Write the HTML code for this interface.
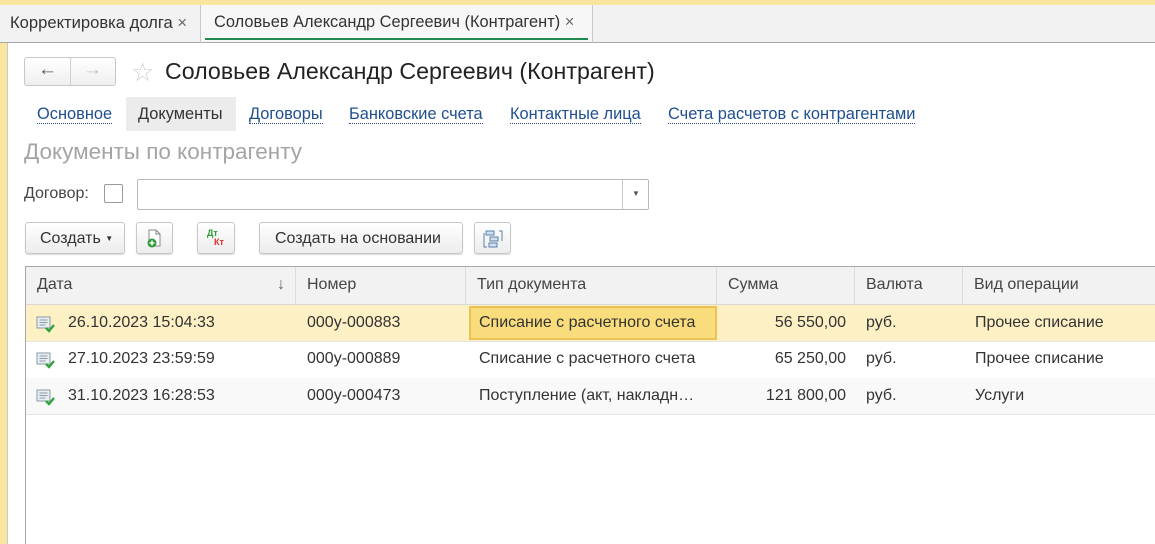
<!DOCTYPE html>
<html><head><meta charset="utf-8"><style>
*{margin:0;padding:0;box-sizing:border-box}
body{width:1155px;height:544px;overflow:hidden;background:#fff;font-family:"Liberation Sans",Arial,sans-serif;color:#333;font-size:16px;position:relative}
.a{position:absolute;white-space:nowrap}
.lnk{color:#1f4f8f;border-bottom:1px dotted #1f4f8f;line-height:18px;font-size:16.4px}
.btn{position:absolute;top:222px;height:32px;border:1px solid #c8c8c8;border-radius:3px;background:linear-gradient(#fff,#ececec);box-shadow:0 1px 1px rgba(0,0,0,.15)}
.th{position:absolute;top:267px;height:37px;background:#f2f2f2;border-right:1px solid #ddd;line-height:36px;padding-left:11px;color:#444}
.row{position:absolute;left:26px;right:0;height:37px;line-height:36px;border-bottom:1px solid #e4e4e4}
.c{position:absolute;top:0;white-space:nowrap}
</style></head><body>
<div class="a" style="left:0;top:0;width:1155px;height:5px;background:#f7e5a0"></div>
<div class="a" style="left:0;top:5px;width:1155px;height:38px;background:#f2f2f2;border-bottom:1px solid #a8a8a8"></div>
<div class="a" style="left:10px;top:13px;font-size:16.6px;color:#333">Корректировка долга <span style="color:#666">×</span></div>
<div class="a" style="left:200px;top:5px;width:1px;height:38px;background:#c8c8c8"></div>
<div class="a" style="left:201px;top:5px;width:391px;height:37px;background:#f7f7f7"></div>
<div class="a" style="left:214px;top:13px;font-size:16.4px;color:#333">Соловьев Александр Сергеевич (Контрагент) <span style="color:#666">×</span></div>
<div class="a" style="left:205px;top:38px;width:383px;height:2px;background:#1e8a50"></div>
<div class="a" style="left:592px;top:5px;width:1px;height:38px;background:#c8c8c8"></div>
<div class="a" style="left:0;top:43px;width:8px;height:501px;background:#f7e5a0;border-right:1px solid #c8c8c8"></div>

<div class="a" style="left:24px;top:57px;width:92px;height:29px;border:1px solid #c8c8c8;border-radius:3px;background:linear-gradient(#fff,#efefef)"></div>
<div class="a" style="left:70px;top:58px;width:1px;height:27px;background:#d0d0d0"></div>
<div class="a" style="left:38px;top:59px;font-size:19px;color:#555;font-weight:bold">&#8592;</div>
<div class="a" style="left:83px;top:59px;font-size:19px;color:#c4c4c4;font-weight:bold">&#8594;</div>
<div class="a" style="left:131px;top:57px;font-size:26px;color:#d0d0d0">☆</div>
<div class="a" style="left:165px;top:58px;font-size:23.2px;color:#222">Соловьев Александр Сергеевич (Контрагент)</div>

<div class="a" style="left:126px;top:97px;width:110px;height:34px;background:#ececec"></div>
<div class="a lnk" style="left:37px;top:105px">Основное</div>
<div class="a" style="left:138px;top:105px;line-height:18px;color:#333;font-size:16.4px">Документы</div>
<div class="a lnk" style="left:249px;top:105px">Договоры</div>
<div class="a lnk" style="left:349px;top:105px">Банковские счета</div>
<div class="a lnk" style="left:510px;top:105px">Контактные лица</div>
<div class="a lnk" style="left:668px;top:105px">Счета расчетов с контрагентами</div>

<div class="a" style="left:24px;top:139px;font-size:22.5px;color:#a4a4a4">Документы по контрагенту</div>

<div class="a" style="left:24px;top:185px;color:#444">Договор:</div>
<div class="a" style="left:104px;top:184px;width:19px;height:19px;border:1px solid #9a9a9a;border-radius:2px;background:#fff"></div>
<div class="a" style="left:137px;top:179px;width:512px;height:31px;border:1px solid #b8b8b8;border-radius:2px"></div>
<div class="a" style="left:622px;top:180px;width:1px;height:29px;background:#c8c8c8"></div>
<div class="a" style="left:632px;top:189px;font-size:8px;color:#555">▼</div>

<div class="btn" style="left:25px;width:100px"><span class="a" style="left:14px;top:7px;color:#333">Создать <span style="font-size:8px;vertical-align:2px">▼</span></span></div>
<div class="btn" style="left:136px;width:37px">
<svg class="a" style="left:9px;top:6px" width="18" height="19" viewBox="0 0 18 19"><path d="M3 1h7l4 4v12H3z" fill="#fff" stroke="#888"/><path d="M10 1v4h4" fill="none" stroke="#888"/><circle cx="6" cy="14" r="4.5" fill="#2e9b3a"/><path d="M6 11.5v5M3.5 14h5" stroke="#fff" stroke-width="1.5"/></svg></div>
<div class="btn" style="left:197px;width:38px"><span class="a" style="left:9px;top:5px;font-size:9px;color:#2e9b3a;font-weight:bold">Дт</span><span class="a" style="left:16px;top:14px;font-size:9px;color:#d33;font-weight:bold">Кт</span></div>
<div class="btn" style="left:259px;width:204px"><span class="a" style="left:15px;top:7px;color:#333">Создать на основании</span></div>
<div class="btn" style="left:474px;width:37px">
<svg class="a" style="left:8px;top:6px" width="20" height="20" viewBox="0 0 20 20" fill="#cfe0f0" stroke="#5a7fa8"><rect x="3" y="2" width="8" height="4"/><rect x="7" y="8" width="8" height="4"/><rect x="6" y="14" width="8" height="4"/><path d="M1 4v14h3M16 2h3v10" fill="none"/></svg></div>

<div class="a" style="left:25px;top:266px;width:1130px;height:278px;border-left:1px solid #a8a8a8;border-top:1px solid #a8a8a8"></div>
<div class="th" style="left:26px;width:270px">Дата<span class="a" style="left:251px;top:0;color:#666">↓</span></div>
<div class="th" style="left:296px;width:170px">Номер</div>
<div class="th" style="left:466px;width:251px">Тип документа</div>
<div class="th" style="left:717px;width:138px">Сумма</div>
<div class="th" style="left:855px;width:108px">Валюта</div>
<div class="th" style="left:963px;width:192px;border-right:0">Вид операции</div>
<div class="a" style="left:26px;top:304px;width:1129px;height:1px;background:#d8d8d8"></div>

<div class="row" style="top:305px;background:#fcf0c4">
<div class="c" style="left:443px;top:1px;width:248px;height:34px;background:#f9dc7c;border:2px solid #ecc257"></div>
</div>
<div class="row" style="top:342px;background:#fff"></div>
<div class="row" style="top:378px;background:#f9f9f9"></div>

<svg class="a" style="left:36px;top:316px" width="20" height="17" viewBox="0 0 20 17"><rect x="1" y="1" width="13" height="11" fill="#e8eef2" stroke="#8a9aa6"/><path d="M3.5 4h8M3.5 6.5h8M3.5 9h6" stroke="#8a9aa6"/><path d="M10 12l3 3 5-6" fill="none" stroke="#2ea33a" stroke-width="2.3"/></svg>
<svg class="a" style="left:36px;top:352px" width="20" height="17" viewBox="0 0 20 17"><rect x="1" y="1" width="13" height="11" fill="#e8eef2" stroke="#8a9aa6"/><path d="M3.5 4h8M3.5 6.5h8M3.5 9h6" stroke="#8a9aa6"/><path d="M10 12l3 3 5-6" fill="none" stroke="#2ea33a" stroke-width="2.3"/></svg>
<svg class="a" style="left:36px;top:389px" width="20" height="17" viewBox="0 0 20 17"><rect x="1" y="1" width="13" height="11" fill="#e8eef2" stroke="#8a9aa6"/><path d="M3.5 4h8M3.5 6.5h8M3.5 9h6" stroke="#8a9aa6"/><path d="M10 12l3 3 5-6" fill="none" stroke="#2ea33a" stroke-width="2.3"/></svg>

<div class="a" style="left:68px;top:314px">26.10.2023 15:04:33</div>
<div class="a" style="left:307px;top:314px">000у-000883</div>
<div class="a" style="left:479px;top:314px">Списание с расчетного счета</div>
<div class="a" style="left:717px;width:129px;text-align:right;top:314px">56 550,00</div>
<div class="a" style="left:866px;top:314px">руб.</div>
<div class="a" style="left:975px;top:314px">Прочее списание</div>

<div class="a" style="left:68px;top:350px">27.10.2023 23:59:59</div>
<div class="a" style="left:307px;top:350px">000у-000889</div>
<div class="a" style="left:479px;top:350px">Списание с расчетного счета</div>
<div class="a" style="left:717px;width:129px;text-align:right;top:350px">65 250,00</div>
<div class="a" style="left:866px;top:350px">руб.</div>
<div class="a" style="left:975px;top:350px">Прочее списание</div>

<div class="a" style="left:68px;top:387px">31.10.2023 16:28:53</div>
<div class="a" style="left:307px;top:387px">000у-000473</div>
<div class="a" style="left:479px;top:387px">Поступление (акт, накладн…</div>
<div class="a" style="left:717px;width:129px;text-align:right;top:387px">121 800,00</div>
<div class="a" style="left:866px;top:387px">руб.</div>
<div class="a" style="left:975px;top:387px">Услуги</div>
</body></html>
